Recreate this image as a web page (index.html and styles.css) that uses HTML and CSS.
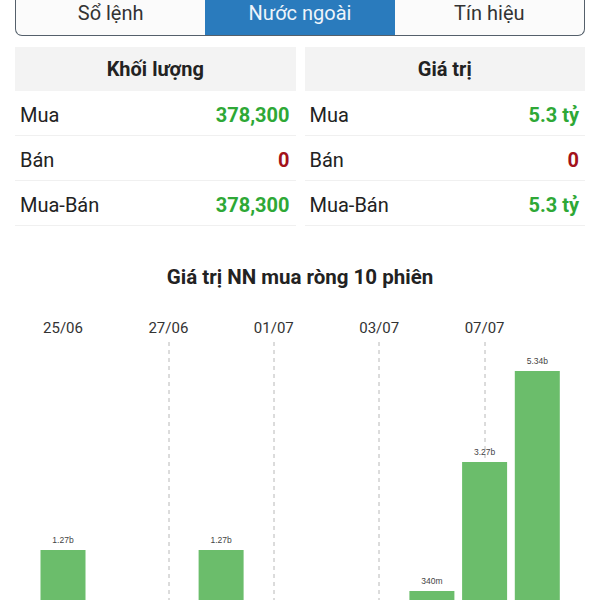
FILE: index.html
```html
<!DOCTYPE html>
<html lang="vi">
<head>
    <meta charset="UTF-8">
    <meta name="viewport" content="width=device-width, initial-scale=1.0">
    <title>Nước ngoài</title>
    <link rel="stylesheet" href="styles.css">
</head>
<body>
    <div class="tabs">
        <div class="tab">Sổ lệnh</div>
        <div class="tab active">Nước ngoài</div>
        <div class="tab">Tín hiệu</div>
    </div>

    <div class="stats">
        <div class="stat-col">
            <div class="stat-head">Khối lượng</div>
            <div class="stat-row"><span class="stat-label">Mua</span><span class="stat-value up">378,300</span></div>
            <div class="stat-row"><span class="stat-label">Bán</span><span class="stat-value down">0</span></div>
            <div class="stat-row"><span class="stat-label">Mua-Bán</span><span class="stat-value up">378,300</span></div>
        </div>
        <div class="stat-col">
            <div class="stat-head">Giá trị</div>
            <div class="stat-row"><span class="stat-label">Mua</span><span class="stat-value up">5.3 tỷ</span></div>
            <div class="stat-row"><span class="stat-label">Bán</span><span class="stat-value down">0</span></div>
            <div class="stat-row"><span class="stat-label">Mua-Bán</span><span class="stat-value up">5.3 tỷ</span></div>
        </div>
    </div>

    <div class="chart">
        <h2 class="chart-title">Giá trị NN mua ròng 10 phiên</h2>
        <svg class="chart-plot" width="600" height="320" viewBox="0 0 600 320">
            <!-- ngày -->
            <g class="chart-dates">
                <text x="63" y="43.5">25/06</text>
                <text x="168.4" y="43.5">27/06</text>
                <text x="273.8" y="43.5">01/07</text>
                <text x="379.2" y="43.5">03/07</text>
                <text x="484.6" y="43.5">07/07</text>
            </g>
            <!-- đường chia -->
            <g class="chart-grid">
                <line x1="169" y1="53" x2="169" y2="320"/>
                <line x1="274" y1="53" x2="274" y2="320"/>
                <line x1="379" y1="53" x2="379" y2="320"/>
                <line x1="485" y1="53" x2="485" y2="320"/>
            </g>
            <!-- cột -->
            <g class="chart-bars">
                <rect x="40.5" y="261" width="45" height="60"/>
                <rect x="198.6" y="261" width="45" height="60"/>
                <rect x="409.4" y="302" width="45" height="20"/>
                <rect x="462.1" y="173" width="45" height="150"/>
                <rect x="514.8" y="82" width="45" height="240"/>
            </g>
            <g class="chart-labels">
                <text x="63" y="254">1.27b</text>
                <text x="221.1" y="254">1.27b</text>
                <text x="431.9" y="295">340m</text>
                <text x="484.6" y="166">3.27b</text>
                <text x="537.3" y="75">5.34b</text>
            </g>
        </svg>
    </div>
</body>
</html>
```

FILE: styles.css
```css
body {
    margin: 0;
    font-family: Roboto, "Noto Sans", Arial, sans-serif;
    background: #fff;
    color: #222;
}
.tabs {
    display: flex;
    margin: 0 15px;
    height: 35px;
    border: 1px solid #55606b;
    border-top: none;
    border-radius: 0 0 7px 7px;
    overflow: hidden;
    background: #fbfbfb;
}
.tab {
    flex: 1;
    text-align: center;
    font-size: 20px;
    line-height: 26px;
    color: #333;
}
.tab.active {
    background: #2a7bbd;
    color: #eef4fa;
}
.stats {
    display: grid;
    grid-template-columns: 1fr 1fr;
    gap: 9px;
    margin: 11px 15px 0;
}
.stat-head {
    height: 44px;
    line-height: 44px;
    background: #f3f3f3;
    text-align: center;
    font-size: 20px;
    font-weight: bold;
    color: #222;
}
.stat-row {
    display: flex;
    justify-content: space-between;
    align-items: center;
    box-sizing: border-box;
    height: 45px;
    padding: 4px 6px 0 5px;
    border-bottom: 1px solid #f0f0f0;
    font-size: 20px;
}
.stat-label {
    color: #222;
}
.stat-value {
    font-weight: bold;
}
.stat-value.up {
    color: #2ea836;
}
.stat-value.down {
    color: #a3121a;
}
.chart-title {
    margin: 39px 0 0;
    text-align: center;
    font-size: 20.5px;
    line-height: 24px;
    font-weight: bold;
    color: #222;
}
.chart-plot {
    display: block;
}
.chart-dates text {
    font-family: Roboto, Arial, sans-serif;
    font-size: 15px;
    fill: #333;
    text-anchor: middle;
}
.chart-grid line {
    stroke: #b8b8b8;
    stroke-width: 1;
    stroke-dasharray: 4 4;
}
.chart-bars rect {
    fill: #6bbd6b;
}
.chart-labels text {
    font-family: "Liberation Sans", Arial, sans-serif;
    font-size: 8.5px;
    fill: #444;
    text-anchor: middle;
}
```
